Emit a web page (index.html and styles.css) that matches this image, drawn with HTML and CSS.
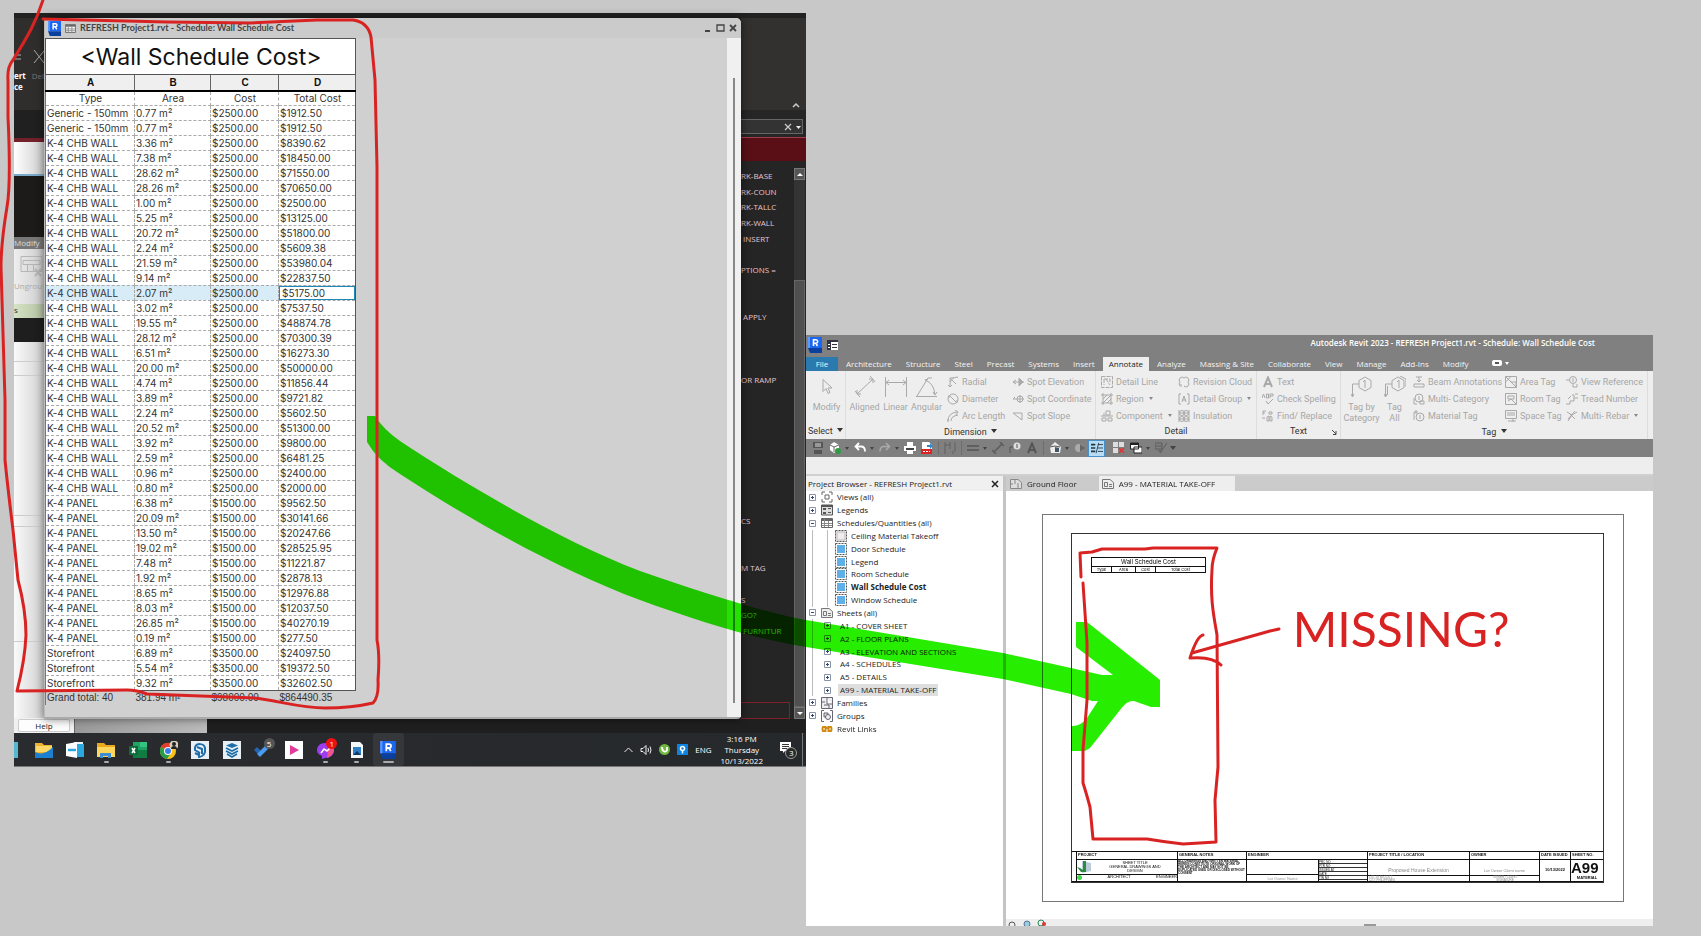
FILE: index.html
```html
<!DOCTYPE html>
<html lang="en">
<head>
<meta charset="utf-8">
<title>Wall Schedule Cost</title>
<link rel="stylesheet" href="styles.css">
</head>
<body>
<svg class="defs" aria-hidden="true">
  <symbol id="revit" viewBox="0 0 14 16"><path fill="#1d66f0" d="M0 0h14v11H0z"/><path fill="#5a9bff" d="M0 0h2v11H0z"/><path fill="#0b3f9e" d="M0 11h14v5H2z"/><path fill="none" stroke="#fff" stroke-width="1.6" d="M5.500 9V2.800h2.500a1.700 1.700 0 0 1 0 3.400H5.500M7.800 6.200l1.700 2.800"/></symbol>
  <symbol id="grid" viewBox="0 0 12 10"><path fill="#fff" stroke="#666" d="M.5.5h11v9H.5z"/><path stroke="#666" stroke-width="2" d="M1 2h10"/><path stroke="#888" d="M3.500 1v8M1 5.500h10M1 7.500h10M7.500 3v6"/></symbol>
  <symbol id="plus" viewBox="0 0 7 7"><path fill="#fff" stroke="#8a93a5" d="M.5.5h6v6h-6z"/><path stroke="#34457a" d="M2 3.500h3M3.500 2v3"/></symbol>
  <symbol id="minus" viewBox="0 0 7 7"><path fill="#fff" stroke="#8a93a5" d="M.5.5h6v6h-6z"/><path stroke="#34457a" d="M2 3.500h3"/></symbol>
  <symbol id="sched" viewBox="0 0 12 12"><path fill="#5fb0e8" d="M2 2h8v8H2z"/><path fill="none" stroke="#555" stroke-dasharray="2 1" d="M.5.5h11v11H.5z"/></symbol>
  <symbol id="sheet" viewBox="0 0 12 10"><path fill="#eee" stroke="#777" d="M.5.5H8l3.500 3v6H.5z"/><path fill="none" stroke="#777" d="M2.500 7.500v-4h3v4zM7 5.500h3M7 7.500h3"/></symbol>
</svg>
<main class="board">

<section class="shot shot-left" aria-label="Desktop with schedule window">
  <div class="desk">
    <div class="topline"></div>
    <div class="strip">
      <div class="s-ribbon">
        <svg width="30" height="14" viewBox="0 0 30 14" stroke="#aaa" fill="none"><path d="M0 5h7M0 9h7M20 0l10 13M30 1L20 13"/></svg>
        <div class="s-words"><b>ert<br>ce</b><span>Del</span></div>
      </div>
      <div class="s-bar"></div><div class="s-page"></div><div class="s-black"></div>
      <div class="s-modify">Modify</div>
      <div class="s-group"><svg width="24" height="22" viewBox="0 0 24 22" fill="none" stroke="#b5b5b5"><path d="M1 1.500h21v15H1zM3 5.500h17v4H3zM7.500 10v6M13.500 10v6"/><path stroke-width="2" d="M15 14l6 7M21 14l-6 7"/></svg><span>Ungrou</span></div>
      <div class="s-green">s</div><div class="s-dark"></div><div class="s-paper"><hr><hr><hr><hr><hr></div>
    </div>
    <section class="win">
      <header class="win-bar">
        <svg width="13" height="15"><use href="#revit"/></svg>
        <svg width="11" height="9"><use href="#grid"/></svg>
        <h2>REFRESH Project1.rvt - Schedule: Wall Schedule Cost</h2>
        <button aria-label="Minimize"><svg width="8" height="8"><path stroke="#444" stroke-width="2" d="M1 7h5"/></svg></button>
        <button aria-label="Maximize"><svg width="9" height="8"><path fill="none" stroke="#444" stroke-width="1.300" d="M1 1h7v6H1z"/></svg></button>
        <button aria-label="Close"><svg width="8" height="8"><path stroke="#444" stroke-width="1.800" d="M1 1l6 6M7 1L1 7"/></svg></button>
      </header>
      <div class="win-body">
        <table class="schedule">
          <colgroup><col class="c1"><col class="c2"><col class="c3"><col class="c4"></colgroup>
          <thead>
            <tr class="title"><th colspan="4">&lt;Wall Schedule Cost&gt;</th></tr>
            <tr class="letters"><th>A</th><th>B</th><th>C</th><th>D</th></tr>
            <tr class="names"><th>Type</th><th>Area</th><th>Cost</th><th>Total Cost</th></tr>
          </thead>
          <tbody>
<tr><td>Generic - 150mm<td>0.77 m²<td>$2500.00<td>$1912.50
<tr><td>Generic - 150mm<td>0.77 m²<td>$2500.00<td>$1912.50
<tr><td>K-4 CHB WALL<td>3.36 m²<td>$2500.00<td>$8390.62
<tr><td>K-4 CHB WALL<td>7.38 m²<td>$2500.00<td>$18450.00
<tr><td>K-4 CHB WALL<td>28.62 m²<td>$2500.00<td>$71550.00
<tr><td>K-4 CHB WALL<td>28.26 m²<td>$2500.00<td>$70650.00
<tr><td>K-4 CHB WALL<td>1.00 m²<td>$2500.00<td>$2500.00
<tr><td>K-4 CHB WALL<td>5.25 m²<td>$2500.00<td>$13125.00
<tr><td>K-4 CHB WALL<td>20.72 m²<td>$2500.00<td>$51800.00
<tr><td>K-4 CHB WALL<td>2.24 m²<td>$2500.00<td>$5609.38
<tr><td>K-4 CHB WALL<td>21.59 m²<td>$2500.00<td>$53980.04
<tr><td>K-4 CHB WALL<td>9.14 m²<td>$2500.00<td>$22837.50
<tr class="current"><td>K-4 CHB WALL<td>2.07 m²<td>$2500.00<td><input value="$5175.00" aria-label="Total Cost">
<tr><td>K-4 CHB WALL<td>3.02 m²<td>$2500.00<td>$7537.50
<tr><td>K-4 CHB WALL<td>19.55 m²<td>$2500.00<td>$48874.78
<tr><td>K-4 CHB WALL<td>28.12 m²<td>$2500.00<td>$70300.39
<tr><td>K-4 CHB WALL<td>6.51 m²<td>$2500.00<td>$16273.30
<tr><td>K-4 CHB WALL<td>20.00 m²<td>$2500.00<td>$50000.00
<tr><td>K-4 CHB WALL<td>4.74 m²<td>$2500.00<td>$11856.44
<tr><td>K-4 CHB WALL<td>3.89 m²<td>$2500.00<td>$9721.82
<tr><td>K-4 CHB WALL<td>2.24 m²<td>$2500.00<td>$5602.50
<tr><td>K-4 CHB WALL<td>20.52 m²<td>$2500.00<td>$51300.00
<tr><td>K-4 CHB WALL<td>3.92 m²<td>$2500.00<td>$9800.00
<tr><td>K-4 CHB WALL<td>2.59 m²<td>$2500.00<td>$6481.25
<tr><td>K-4 CHB WALL<td>0.96 m²<td>$2500.00<td>$2400.00
<tr><td>K-4 CHB WALL<td>0.80 m²<td>$2500.00<td>$2000.00
<tr><td>K-4 PANEL<td>6.38 m²<td>$1500.00<td>$9562.50
<tr><td>K-4 PANEL<td>20.09 m²<td>$1500.00<td>$30141.66
<tr><td>K-4 PANEL<td>13.50 m²<td>$1500.00<td>$20247.66
<tr><td>K-4 PANEL<td>19.02 m²<td>$1500.00<td>$28525.95
<tr><td>K-4 PANEL<td>7.48 m²<td>$1500.00<td>$11221.87
<tr><td>K-4 PANEL<td>1.92 m²<td>$1500.00<td>$2878.13
<tr><td>K-4 PANEL<td>8.65 m²<td>$1500.00<td>$12976.88
<tr><td>K-4 PANEL<td>8.03 m²<td>$1500.00<td>$12037.50
<tr><td>K-4 PANEL<td>26.85 m²<td>$1500.00<td>$40270.19
<tr><td>K-4 PANEL<td>0.19 m²<td>$1500.00<td>$277.50
<tr><td>Storefront<td>6.89 m²<td>$3500.00<td>$24097.50
<tr><td>Storefront<td>5.54 m²<td>$3500.00<td>$19372.50
<tr><td>Storefront<td>9.32 m²<td>$3500.00<td>$32602.50
          </tbody>
          <tfoot><tr><td>Grand total: 40<td>381.94 m²<td>$98000.00<td>$864490.35</tfoot>
        </table>
        <div class="scroll"><i></i></div>
      </div>
    </section>
    <div class="list">
      <div class="l-ribbon"><svg width="9" height="6"><path fill="none" stroke="#ccc" stroke-width="1.500" d="M1 5l3-3 3 3"/></svg></div>
      <div class="l-search"><div><svg width="18" height="8"><path stroke="#ccc" stroke-width="1.200" d="M1 1l6 6M7 1L1 7"/><path fill="#eee" d="M12 3h5l-2.500 3z"/></svg></div></div>
      <div class="l-red"></div>
      <div class="l-main">
        <div class="l-rows">
          <span>RK-BASE</span><span>RK-COUN</span><span>RK-TALLC</span><span>RK-WALL</span><span>&nbsp;INSERT</span>
          <span class="r7">PTIONS =</span><span class="r10">&nbsp;APPLY</span><span class="r14">OR RAMP</span>
          <span class="r23">CS</span><span class="r26">M TAG</span><span class="r28">S</span><span class="r29">GO?</span><span class="r30">&nbsp;FURNITUR</span>
        </div>
        <div class="l-scroll"><b></b><i></i><b class="down"></b></div>
        <div class="l-box"></div>
      </div>
    </div>
    <div class="under"><div class="help"><button>Help</button></div><div class="grey"></div></div>
  </div>
  <footer class="taskbar">
    <span class="tb-cut"></span>
    <div class="apps">
      <button aria-label="Edge folder"><svg viewBox="0 0 18 18"><path fill="#f0b232" d="M0 2h7l2 2h8v12H0z"/><path fill="#ffd866" d="M1 5h16v6H1z"/><path fill="#1c7fd0" d="M0 11c6 3 12 1 18-5v11H0z"/></svg></button>
      <button aria-label="Mail"><svg viewBox="0 0 18 18"><path fill="#e8f4fb" d="M8 1h9v14H8z"/><path fill="#2aa8e0" d="M10 3h8v13h-8z"/><path fill="#fff" d="M0 3l11-2v16L0 15z"/><path stroke="#2aa8e0" stroke-width="2.500" d="M2 9h8"/></svg></button>
      <button class="run" aria-label="Explorer"><svg viewBox="0 0 18 18"><path fill="#e9a820" d="M0 2h7l2 2h9v3H0z"/><path fill="#ffd65c" d="M0 6h18v10H0z"/><path fill="#3f8fd0" d="M3 12h11v5h-3v-2H6v2H3z"/></svg></button>
      <button aria-label="Excel"><svg viewBox="0 0 18 18"><path fill="#21a366" d="M4 1h14v16H4z"/><path fill="#107c41" d="M4 9h14v8H4z"/><path fill="#33c481" d="M11 1h7v5h-7z"/><path fill="#0c6b37" d="M0 5h9v9H0z"/><path stroke="#fff" stroke-width="1.500" d="M3 7l3 5M6 7l-3 5"/></svg></button>
      <button class="run" aria-label="Chrome"><svg viewBox="0 0 18 18"><circle cx="8" cy="10" r="8" fill="#fbc116"/><path fill="#e33b2e" d="M8 10L1 6a8 8 0 0 1 14 0z"/><path fill="#2a9d48" d="M8 10L1 6a8 8 0 0 0 6 12l4-6z"/><circle cx="8" cy="10" r="4" fill="#fff"/><circle cx="8" cy="10" r="3" fill="#3b7ded"/><circle cx="14" cy="4" r="4.500" fill="#d8cdb8"/><circle cx="14" cy="3" r="2" fill="#222"/><path fill="#222" d="M11 8c0-4 6-4 6 0z"/></svg></button>
      <button aria-label="SketchUp"><svg viewBox="0 0 18 18"><path fill="#e8f0f5" d="M0 0h18v18H0z"/><path fill="none" stroke="#1f6ea8" stroke-width="2" d="M4 6c2-4 9-4 10 1v4c-1 4-5 5-6 5v-4M4 6v3l5 3M4 12l4 2M6 6l5 2v5"/></svg></button>
      <button aria-label="LayOut"><svg viewBox="0 0 18 18"><path fill="#e8f0f5" d="M0 0h18v18H0z"/><path fill="#1f6ea8" d="M9 2l6 2.500L9 7 3 4.500z"/><path fill="none" stroke="#1f6ea8" stroke-width="1.800" d="M3 7l6 3 6-3M3 10l6 3 6-3M4 13l5 3 5-3"/></svg></button>
      <button aria-label="To Do"><svg viewBox="0 0 18 18"><path fill="#2563b5" d="M0 9l3-3 5 5-3 3z"/><path fill="#4a9df0" d="M3 13L13 3l3 3L6 16z"/></svg><em class="dim">5</em></button>
      <button aria-label="Player"><svg viewBox="0 0 18 18"><path fill="#fff" d="M0 0h18v18H0z"/><path fill="#e23a9a" d="M5 4l9 5-9 5z"/></svg></button>
      <button class="run" aria-label="Messenger"><svg viewBox="0 0 18 18"><path fill="#9b3df0" d="M8 2c5 0 9 3 9 7.500S13 17 8 17l-3 1v-3C2 14 0 12 0 9.500 0 5 3 2 8 2z"/><path fill="#f0558c" d="M12 3c3 1 5 3 5 6s-3 7-7 8z"/><path fill="none" stroke="#fff" stroke-width="1.600" d="M4 12l3-4 3 2 3-3"/></svg><em>1</em></button>
      <button class="run" aria-label="Photo"><svg viewBox="0 0 18 18"><path fill="#f4f6f8" d="M3 1h9l3 3v13H3z"/><path fill="#2d7fc8" d="M5 6h8v8H5z"/><path fill="#123a66" d="M5 14l4-4 4 4z"/></svg></button>
      <button class="run on" aria-label="Revit"><svg viewBox="0 0 14 16"><use href="#revit"/></svg></button>
    </div>
    <div class="tray">
      <svg width="9" height="6"><path fill="none" stroke="#eee" d="M.5 5l4-4 4 4"/></svg>
      <svg width="12" height="10" fill="none" stroke="#eee"><path d="M1 3.500h2l3-3v9l-3-3H1zM8 3q1 2 0 4M10 1.500q2 3.500 0 7"/></svg>
      <svg width="11" height="11"><circle cx="5.500" cy="5.500" r="5.500" fill="#6fb83f"/><path fill="none" stroke="#fff" stroke-width="1.800" d="M3 3c0 5 4 6 5 3V3"/></svg>
      <svg width="11" height="11"><path fill="#0c84e4" d="M0 0h11v11H0z"/><circle cx="5.500" cy="4.500" r="2" fill="none" stroke="#fff" stroke-width="1.500"/><path stroke="#fff" stroke-width="1.500" d="M5.500 7v2.500"/></svg>
      <span>ENG</span>
      <time>3:16 PM<br>Thursday<br>10/13/2022</time>
      <svg class="note" width="20" height="18"><path fill="#fff" d="M1 1h11v9H6l-2 2v-2H1z"/><path stroke="#333" d="M3 3.500h7M3 5.500h7M3 7.500h5"/><circle cx="12" cy="12" r="5.500" fill="#26282a" stroke="#999"/><text x="10" y="15" fill="#fff">3</text></svg>
    </div>
  </footer>
</section>

<section class="shot shot-right" aria-label="Revit window">
  <header class="r-title">
    <svg width="14" height="16"><use href="#revit"/></svg>
    <svg width="11" height="10"><path fill="#fff" d="M0 0h11v10H0z"/><path fill="#334" d="M0 0h11v2H0zM0 2h4v8H0zM5 4h5v1H5zM5 7h5v1H5z"/><path fill="#fff" d="M1 4h2v1H1zM1 7h2v1H1z"/></svg>
    <h1>Autodesk Revit 2023 - REFRESH Project1.rvt - Schedule: Wall Schedule Cost</h1>
  </header>
  <nav class="r-tabs">
    <button class="file">File</button><button>Architecture</button><button>Structure</button><button>Steel</button><button>Precast</button><button>Systems</button><button>Insert</button><button class="on">Annotate</button><button>Analyze</button><button>Massing &amp; Site</button><button>Collaborate</button><button>View</button><button>Manage</button><button>Add-Ins</button><button>Modify</button>
    <button aria-label="Ribbon display" class="disp"><svg width="18" height="7"><rect width="10" height="6" rx="2" fill="#fff"/><path fill="#555" d="M3 2h4v2H3z"/><path fill="#fff" d="M13 2h4l-2 3z"/></svg></button>
  </nav>
  <div class="ribbon">
    <div class="panel p-select"><div class="tools"><button class="big"><svg width="12" height="18" viewBox="0 0 12 18"><path d="M2 1.500v12l3-3 2 5 2-1-2-4.500h4z"/></svg>Modify</button></div><button class="cap">Select <i></i></button></div>
    <div class="panel p-dim"><div class="tools">
      <button class="big"><svg width="22" height="22" viewBox="0 0 22 22"><path d="M3 18L19 3M1 15l5 6M16 0l5 6M3 18v-4M3 18h4M19 3v4M19 3h-4"/></svg>Aligned</button>
      <button class="big"><svg width="22" height="22" viewBox="0 0 22 22"><path d="M.5 1v20M21.500 1v20M1 6.500h20M4 4L1 6.500 4 9M18 4l3 2.500L18 9"/></svg>Linear</button>
      <button class="big"><svg width="22" height="22" viewBox="0 0 22 22"><path d="M0 20.500h21M1 20L12 2l4 0M9 4q9 3 10 15M9 4l3-1M19 19l-2-3M19 19l2-3"/></svg>Angular</button>
      <div class="small two">
        <button><svg viewBox="0 0 12 12"><path d="M11 1Q2 1 3 11M3 2l6 6M3 2v4M3 2h4M1 9l2 2 2-2"/></svg>Radial</button>
        <button><svg viewBox="0 0 12 12"><path d="M1 6h8M4 4L1 6l3 2M11 6h1"/><path fill="#aaa" d="M7 2v8l4-4z"/></svg>Spot Elevation</button>
        <button><svg viewBox="0 0 12 12"><circle cx="6" cy="6" r="5"/><path d="M2 2l8 8M2 2v3M10 10V7"/></svg>Diameter</button>
        <button><svg viewBox="0 0 12 12"><circle cx="8" cy="6" r="3"/><path d="M1 6h11M8 2v8M3 4L1 6"/></svg>Spot Coordinate</button>
        <button><svg viewBox="0 0 12 12"><path d="M1 11Q1 3 10 2M4 11q0-5 7-6M8 0l3 2-2 3M1 9v3"/></svg>Arc Length</button>
        <button><svg viewBox="0 0 12 12"><path d="M1 3h9v7zM1 3"/></svg>Spot Slope</button>
      </div></div><button class="cap">Dimension <i></i></button></div>
    <div class="panel p-detail"><div class="tools"><div class="small two">
        <button><svg viewBox="0 0 12 12"><path d="M.5.5h11v11H.5zM3 3v6M5 3l4 6M9 3v3M3 3h6" stroke-dasharray="4 1"/></svg>Detail Line</button>
        <button><svg viewBox="0 0 12 12"><path d="M2 2q2-2 4 0 2-2 4 0 2 2 0 4 2 2 0 4-2 2-4 0M2 2Q0 4 2 6q-2 2 0 4M3 8v3"/></svg>Revision Cloud</button>
        <button><svg viewBox="0 0 12 12"><path d="M2 0v12M10 0v12M0 2h12M0 10h12M2 6l4-4M2 10l8-8M6 10l4-4"/></svg>Region <i></i></button>
        <button><svg viewBox="0 0 12 12"><path d="M3 1H1v10h2M9 1h2v10H9M4 9l2-6 2 6M4 7h4"/></svg>Detail Group <i></i></button>
        <button><svg viewBox="0 0 12 12"><path d="M5 1h4v4H5zM0 6h12M1 8h4v3H1zM7 8h4v3H7zM3 3v3"/></svg>Component <i></i></button>
        <button><svg viewBox="0 0 12 12"><path d="M1 0v12M11 0v12M1 3h10M1 9h10"/><circle cx="4" cy="3" r="2.500"/><circle cx="8" cy="3" r="2.500"/><circle cx="4" cy="9" r="2.500"/><circle cx="8" cy="9" r="2.500"/></svg>Insulation</button>
      </div></div><div class="cap">Detail</div></div>
    <div class="panel p-text"><div class="tools"><div class="small">
        <button><svg viewBox="0 0 12 12"><path stroke-width="2" d="M2 11L6 1.500 10 11M4 8h4"/></svg>Text</button>
        <button><svg viewBox="0 0 12 12"><path d="M0 5l1.500-4L3 5M4.500 1v4h2v-4zM8 5V1h3v2H8M4 8l2 3 5-5" /></svg>Check Spelling</button>
        <button><svg viewBox="0 0 12 12"><path d="M1 5V1h3M1 3h2M7 2h3v2H7zM0 8h3M5 11V7l2-1v5zM8 11V6l2 1v4z"/></svg>Find/ Replace</button>
      </div></div><div class="cap">Text <svg class="corner" width="5" height="5"><path d="M0 0l4 4M4 1v3.500H1" stroke="#444"/></svg></div></div>
    <div class="panel p-tag"><div class="tools">
      <button class="big"><svg width="22" height="22" viewBox="0 0 22 22"><path d="M14 1l6 3.500v7L14 15l-6-3.500v-7zM8 8H1.500v12M0 18l1.500 3L3 18M12 6l2-2v8"/></svg>Tag by<br>Category</button>
      <button class="big"><svg width="22" height="22" viewBox="0 0 22 22"><path d="M14 1l6 3.500v7L14 15l-6-3.500v-7zM16 0l6 3v8M8 8H1.500v12M3.500 10v9M0 18l1.500 3L3 18M13 6l2-2v8"/></svg>Tag<br>All</button>
      <div class="small three">
        <button><svg viewBox="0 0 12 12"><path d="M3 1h6M6 1v5M4 4l2 2 2-2M1 8h10M1 11h10M1 8v3M11 8v3"/></svg>Beam Annotations</button>
        <button><svg viewBox="0 0 12 12"><path d="M.5.5h11v11H.5zM.5.5l11 11M.5 6L6 .5M6 6h5v5"/></svg>Area Tag</button>
        <button><svg viewBox="0 0 12 12"><circle cx="7" cy="4" r="3.500"/><path d="M0 4h3M7 2v4M7 8v3h4V8"/></svg>View Reference</button>
        <button><svg viewBox="0 0 12 12"><circle cx="6" cy="5" r="4"/><path d="M6 3v4M1 5v6h3M7 11V8h4v3z"/></svg>Multi- Category</button>
        <button><svg viewBox="0 0 12 12"><path d="M.5.5h11v11H.5zM3 3h6v3H3zM3 8l3-2 5 5"/></svg>Room Tag</button>
        <button><svg viewBox="0 0 12 12"><path d="M0 11h4V8h4V5h4M2 6l3-3M6 2h2v3M9 1h3"/></svg>Tread Number</button>
        <button><svg viewBox="0 0 12 12"><circle cx="7" cy="7" r="4"/><path d="M7 5v4M1 2v8M1 2h4M3 0v4"/></svg>Material Tag</button>
        <button><svg viewBox="0 0 12 12"><path d="M.5.5h11v8H.5zM2 3h8M2 5h8M3 11h8M8 8v4"/></svg>Space Tag</button>
        <button><svg viewBox="0 0 12 12"><path d="M1 2l5 3 5-3M6 5L2 11M3 3l6 6M9 1l-7 8"/></svg>Multi- Rebar <i></i></button>
      </div></div><button class="cap">Tag <i></i></button></div>
  </div>
  <div class="qat">
    <button aria-label="Save"><svg viewBox="0 0 12 12"><path fill="#555" d="M1 0h10v6H1zM2 8h8v4H2z"/><path fill="#999" d="M3 1h6v4H3z"/></svg></button>
    <button aria-label="Sync"><svg viewBox="0 0 12 12"><path fill="#fff" d="M5 0l5 3v5L5 11 1 8V3z"/><path stroke="#666" fill="none" d="M1 3l4 2 5-2M5 5v5"/><circle cx="9" cy="9" r="3" fill="#2f9b45"/></svg></button><button class="car" aria-label="Sync options"></button>
    <button aria-label="Undo"><svg viewBox="0 0 12 12"><path fill="none" stroke="#fff" stroke-width="1.800" d="M5 1L1.500 4.500 5 8M2 4.500h5q4 0 4 5"/></svg></button><button class="car" aria-label="Undo options"></button>
    <button aria-label="Redo"><svg viewBox="0 0 12 12"><path fill="none" stroke="#aaa" stroke-width="1.500" d="M7 1l3.500 3.500L7 8M10 4.500H5q-4 0-4 5"/></svg></button><button class="car" aria-label="Redo options"></button>
    <button aria-label="Print"><svg viewBox="0 0 12 12"><path fill="#fff" d="M3 0h6v4H3zM0 4h12v5H0zM3 8h6v4H3z"/><path fill="#444" d="M2 6h8v2H2z"/></svg></button>
    <button aria-label="PDF"><svg viewBox="0 0 12 12"><path fill="#fff" d="M1 0h7l3 3v8H1z"/><path fill="#d22" d="M0 7h11v5H0z"/><path fill="#38c" d="M6 3h3V1l3 3-3 3V5H6z"/><path stroke="#fff" d="M2 9.500h7" stroke-dasharray="2 1"/></svg></button>
    <hr><button aria-label="Measure"><svg viewBox="0 0 12 12" fill="none" stroke="#606060"><path d="M1 0v12M11 0v10M1 3h5M6 0v7M8 9q3 3 0 3"/></svg></button>
    <hr><button aria-label="Aligned"><svg viewBox="0 0 12 12" stroke="#555" stroke-width="1.500"><path d="M0 4h12M0 8h12"/></svg></button><button class="car" aria-label="Measure options"></button>
    <button aria-label="Dimension"><svg viewBox="0 0 12 12" stroke="#5a5a5a" stroke-width="1.500" fill="none"><path d="M2 10l8-8M0 8l4 4M8 0l4 4"/></svg></button>
    <button aria-label="Tag"><svg viewBox="0 0 12 12"><circle cx="8" cy="4" r="3.500" fill="#ddd"/><path stroke="#555" fill="none" d="M8 2v4M4 5H1v6"/></svg></button>
    <button aria-label="Text"><svg viewBox="0 0 12 12" stroke="#555" stroke-width="2" fill="none"><path d="M2 11L6 1.500 10 11M4 8h4"/></svg></button>
    <hr><button aria-label="3D view"><svg viewBox="0 0 12 12"><path fill="#eee" d="M6 0l6 5-1 6H2L1 5z"/><path fill="#456" d="M6 5l4 1v4H6z"/><path stroke="#555" fill="none" d="M1 5l5-1 5 1"/></svg></button><button class="car" aria-label="View options"></button>
    <button aria-label="Section"><svg viewBox="0 0 12 12"><circle cx="5" cy="6" r="4" fill="#aaa"/><path fill="#666" d="M6 2l5 4-5 4z"/></svg></button>
    <button class="act" aria-label="Thin lines"><svg viewBox="0 0 14 12" stroke="#234"><path stroke-width="2" d="M0 2h5M0 6h5M0 10h5"/><path d="M8 2h6M8 6h6M8 10h6M9 0L6 12"/></svg></button>
    <button aria-label="Close views"><svg viewBox="0 0 12 12"><path fill="#ddd" d="M0 0h5v5H0zM6 0h5v5H6zM0 6h5v5H0z"/><path stroke="#d33" stroke-width="1.500" d="M6 6l5 5M11 6l-5 5"/></svg></button>
    <button aria-label="Switch windows"><svg viewBox="0 0 12 12"><path fill="#fff" stroke="#222" d="M.5 1h8v6h-8zM4 5h8v6H4z"/><path stroke="#222" stroke-width="2" d="M0 2h9"/></svg></button><button class="car" aria-label="Window options"></button>
    <button aria-label="User interface"><svg viewBox="0 0 12 12" stroke="#5c5c5c" fill="none"><path d="M0 1h7v6H0zM0 4h7M5 11l7-10M3 9h4"/></svg></button><button class="car last" aria-label="Customize"></button>
  </div>
  <div class="options"></div>
  <div class="work">
    <aside class="browser">
      <header><h3>Project Browser - REFRESH Project1.rvt</h3><button aria-label="Close browser"><svg width="8" height="8"><path stroke="#222" stroke-width="1.500" d="M1 1l6 6M7 1L1 7"/></svg></button></header>
      <ul class="tree">
        <li><svg class="ex"><use href="#plus"/></svg><svg class="ic" viewBox="0 0 12 12"><path fill="none" stroke="#666" d="M1 4V1h3M8 1h3v3M1 8v3h3M8 11h3V8M4 4h4v4H4z"/></svg>Views (all)</li>
        <li><svg class="ex"><use href="#plus"/></svg><svg class="ic" viewBox="0 0 12 12"><path fill="#ddd" stroke="#555" d="M.5 1h11v10H.5z"/><path stroke="#555" stroke-width="2" d="M1 2h10"/><path fill="#555" d="M2 4h3v2H2zM2 8h3v2H2zM7 4h3v1H7zM7 8h3v1H7z"/></svg>Legends</li>
        <li><svg class="ex"><use href="#minus"/></svg><svg class="ic"><use href="#grid"/></svg>Schedules/Quantities (all)</li>
        <li class="sub"><svg class="ic" viewBox="0 0 12 12"><path fill="#f0ecec" stroke="#555" stroke-dasharray="2 1" d="M.5.5h11v11H.5z"/><path fill="none" stroke="#bbb" d="M2 2h8v8H2z"/></svg>Ceiling Material Takeoff</li>
        <li class="sub"><svg class="ic"><use href="#sched"/></svg>Door Schedule</li>
        <li class="sub"><svg class="ic"><use href="#sched"/></svg>Legend</li>
        <li class="sub"><svg class="ic"><use href="#sched"/></svg>Room Schedule</li>
        <li class="sub"><svg class="ic"><use href="#sched"/></svg><b>Wall Schedule Cost</b></li>
        <li class="sub"><svg class="ic"><use href="#sched"/></svg>Window Schedule</li>
        <li><svg class="ex"><use href="#minus"/></svg><svg class="ic"><use href="#sheet"/></svg>Sheets (all)</li>
        <li class="sh"><svg class="ex"><use href="#plus"/></svg><span>A1 - COVER SHEET</span></li>
        <li class="sh"><svg class="ex"><use href="#plus"/></svg><span>A2 - FLOOR PLANS</span></li>
        <li class="sh"><svg class="ex"><use href="#plus"/></svg><span>A3 - ELEVATION AND SECTIONS</span></li>
        <li class="sh"><svg class="ex"><use href="#plus"/></svg><span>A4 - SCHEDULES</span></li>
        <li class="sh"><svg class="ex"><use href="#plus"/></svg><span>A5 - DETAILS</span></li>
        <li class="sh"><svg class="ex"><use href="#plus"/></svg><mark>A99 - MATERIAL TAKE-OFF</mark></li>
        <li><svg class="ex"><use href="#plus"/></svg><svg class="ic" viewBox="0 0 12 12"><path fill="#eee" stroke="#667" d="M.5.5h11v11H.5zM6 1v6h5M1 5h3M3 8h5v3"/></svg>Families</li>
        <li><svg class="ex"><use href="#plus"/></svg><svg class="ic" viewBox="0 0 12 12"><path fill="none" stroke="#667" d="M3 .5H.5v11H3M9 .5h2.500v11H9"/><path fill="#ddd" stroke="#667" d="M3 3h4v4H3z"/><circle cx="7" cy="7" r="2.500" fill="#eee" stroke="#667"/></svg>Groups</li>
        <li><svg class="ex"></svg><svg class="ic" viewBox="0 0 12 12"><path fill="none" stroke="#d08a14" stroke-width="2" d="M2 4h2.500v4H2q-1-2 0-4zM7.500 4H10q1 2 0 4H7.500zM4 5h4"/></svg>Revit Links</li>
      </ul>
    </aside>
    <div class="views">
      <nav class="v-tabs">
        <button><svg width="12" height="10" viewBox="0 0 12 10"><path fill="#ddd" stroke="#888" d="M.5.5H8l3.500 3v6H.5zM5 1v4M1 5h2M8 4v5"/></svg>Ground Floor</button>
        <button class="on"><svg width="12" height="10"><use href="#sheet"/></svg>A99 - MATERIAL TAKE-OFF</button>
      </nav>
      <div class="canvas"><div class="page"><div class="frame">
        <table class="mini"><caption>Wall Schedule Cost</caption><tr><th>Type<th>Area<th>Cost<th>Total Cost</table>
        <div class="block">
          <div class="cell b0"></div>
          <div class="cell b1"><h4>PROJECT</h4><div class="logo"><svg width="16" height="14"><path fill="#bcd" d="M5 1l9 2v8l-9 2z"/><path fill="#2c8c3c" d="M6 1h3v11H4L0 7l3 1 3 2z"/></svg><p>SHEET TITLE<br>GENERAL DRAWINGS AND<br>DESIGN</p></div><div class="foot"><svg width="5" height="5"><circle cx="2.500" cy="2.500" r="2.500" fill="#3fd84b"/></svg><span>ARCHITECT</span><span>ENGINEER</span></div></div>
          <div class="cell b2"><h4>GENERAL NOTES</h4><p>ALL DRAWINGS AND WRITTEN MATERIAL HEREIN CONSTITUTE ORIGINAL WORK OF THE ARCHITECT AND MAY NOT BE DUPLICATED USED OR DISCLOSED WITHOUT CONSENT</p></div>
          <div class="cell b3"><h4>ENGINEER</h4><div class="split"><div><p class="low">Lot Owner Name</p></div><ul><li>PRC NO<li>PTR NO<li>ISSUED AT<li>DATE<li>TIN NO</ul></div></div>
          <div class="cell b4"><h4>PROJECT TITLE / LOCATION</h4><p class="mid">Proposed House Extension</p><p class="foot">LOT 10 BLOCK 2<br>CITY PHILIPPINES</p></div>
          <div class="cell b5"><h4>OWNER</h4><p class="mid">Lot Owner Client name</p><p class="foot ctr">OWNER / CLIENT<br>SIGNATURE</p></div>
          <div class="cell b6"><h4>DATE ISSUED</h4><p class="mid dk">10/13/2022</p></div>
          <div class="cell b7"><h4>SHEET NO.</h4><strong>A99</strong><p class="ctr dk">MATERIAL</p></div>
        </div>
      </div></div></div>
      <div class="v-bar"><svg width="40" height="7"><circle cx="6" cy="6" r="3" fill="none" stroke="#555"/><circle cx="21" cy="5" r="3" fill="#9cd" stroke="#579"/><circle cx="35" cy="4" r="3" fill="none" stroke="#285"/><circle cx="38" cy="5" r="2" fill="#d33"/></svg><i></i></div>
    </div>
  </div>
</section>

<svg class="ink marker" viewBox="0 0 1701 936" preserveAspectRatio="none" aria-hidden="true"><path fill="#27ee00" d="M367 416h8Q384 430 400 441C470 487 560 540 640 571 700 592 770 614 806 620L1003 653 1071 668 1102 675H1113L1076 647V622H1087L1145 668 1160 680V707H1151L1134 701Q1127 700 1120 710L1090 748 1085 751H1071V726Q1080 727 1087 718L1098 701H1092L1071 694 1003 679 806 647C760 640 700 622 640 600 560 570 470 520 400 474Q377 460 367 442z"/></svg>
<svg class="ink" viewBox="0 0 1701 936" preserveAspectRatio="none" aria-hidden="true"><g fill="none" stroke="#d92323" stroke-width="3" stroke-linecap="round" stroke-linejoin="round">
<path d="M43 0C36 22 28 36 13 60Q7 67 8 80V117C10 160 10 190 7 207 4 225 1 245 1 267L5 400V460Q8 490 13 530L18 580Q26 610 26 635 25 660 17 691L127 690Q137 690 147 694L255 698C280 701 300 708 325 708 345 708 360 706 373 703Q379 697 378 680 380 655 377 640V167L375 80 371 37Q368 22 353 20H317L250 23 167 22 43 19"/>
<path d="M1081 577L1080 553 1092 552 1102 549H1145L1153 548H1217Q1212 560 1212 570C1210 600 1214 617 1217 635L1218 767 1215 800 1216 842 1183 844Q1165 842 1147 839H1093L1090 807Q1086 792 1083 783V750L1087 700V643L1083 583M1279 629L1270 631 1192 653M1203 635Q1197 636 1190 658 1212 656 1221 665"/></g></svg>
<p class="ink-note">MISSING?</p>
</main>
</body>
</html>
```
FILE: styles.css
```css
* { box-sizing: border-box; }
body { margin: 0; background: #c8c8c8; font: 8px/12px "Open Sans", "Noto Sans", sans-serif; color: #222; }
h1, h2, h3, h4, p, ul { margin: 0; padding: 0; font-size: inherit; }
ul { list-style: none; }
button { margin: 0; padding: 0; border: 0; background: none; font: inherit; color: inherit; }
svg { flex: none; }
.defs { position: absolute; width: 0; height: 0; }

.board { position: relative; min-height: 100vh; display: grid; grid-template-columns: 792fr 847fr; padding: 13px 48px 10px 14px; overflow: hidden; isolation: isolate; }
.shot { min-width: 0; display: flex; flex-direction: column; isolation: isolate; }
.shot-left { align-self: start; }
.shot-right { align-self: end; background: #eee; min-height: 591px; }
.ink { position: absolute; left: 0; top: 0; width: 100%; height: 100%; pointer-events: none; }
.marker { mix-blend-mode: multiply; }
.ink-note { position: absolute; left: 76%; top: 64%; font: 48px/60px Lato, sans-serif; color: #d92323; }

/* left capture */
.desk { display: grid; grid-template-columns: 30px 1fr 65px; grid-template-rows: 5px minmax(701px, auto) 14px; background: #1f1f1f; }
.topline { grid-area: 1 / 1 / 2 / 4; background: #222; }
.strip { grid-area: 2 / 1; display: flex; flex-direction: column; overflow: hidden; color: #fff; }
.s-ribbon { height: 92px; background: #302e2c; padding-top: 32px; }
.s-words { display: flex; justify-content: space-between; line-height: 11px; height: 28px; margin-top: 3px; }
.s-words span { color: #777; }
.s-bar { height: 32px; background: #202020; border-bottom: 4px solid #74202a; }
.s-page { height: 34px; background: linear-gradient(90deg, #fff, #ccc); border-bottom: 2px solid #7aa9c8; }
.s-black { height: 61px; background: #1c1b1a; }
.s-modify { height: 12px; background: #777; color: #ddd; }
.s-group { height: 55px; background: linear-gradient(90deg, #eee, #ccc); padding: 6px 0 0 6px; color: #aaa; }
.s-group span { display: block; margin-left: -6px; }
.s-green { height: 14px; background: linear-gradient(90deg, #d5e4c4, #b5c0a4); color: #333; }
.s-dark { height: 24px; background: #1e1e1e; }
.s-paper { flex: 1; background: linear-gradient(90deg, #fafafa, #d0d0d0); }
.s-paper hr { margin: 0; border: 0; border-bottom: 1px solid #ccc; height: 20px; }
.s-paper hr:nth-child(2) { height: 14px; }
.s-paper hr:nth-child(3) { height: 140px; }
.s-paper hr:nth-child(4) { height: 11px; }
.s-paper hr:nth-child(5) { height: 115px; }

.win { grid-area: 2 / 2; background: #d0d0d0; border-radius: 0 5px 4px 0; border-bottom: 2px solid #aaa; border-left: 1px solid #bbb; box-shadow: 0 0 10px #0008; z-index: 1; display: flex; flex-direction: column; }
.win-bar { height: 20px; display: flex; align-items: center; gap: 4px; padding: 0 4px 0 3px; background: #cbcbcb; border-radius: 0 5px 0 0; }
.win-bar h2 { flex: 1; font: bold 9px/12px Lato, sans-serif; color: #444; }
.win-bar button { display: flex; }
.win-body { flex: 1; display: flex; justify-content: space-between; align-items: flex-start; }
.schedule { width: 311px; table-layout: fixed; border-collapse: collapse; border-left: 1px solid #777; background: #fff; font: 10px/14px Inter, sans-serif; color: #333; }
.c1 { width: 89px; } .c2 { width: 76px; } .c3 { width: 68px; }
.schedule th, .schedule td { padding: 0 0 0 1px; height: 15px; border: 1px dashed #aaa; font-weight: 400; white-space: nowrap; }
.schedule tr.title th { height: 36px; font-size: 23px; color: #111; border: 1px solid #555; }
.schedule tr.letters th { height: 16px; font: bold 10px/13px "Liberation Sans", sans-serif; background: #efefef; border: 1px solid #666; border-bottom: 2px solid #000; color: #111; }
.schedule tr.names th { height: 14px; line-height: 13px; }
.schedule tbody td:last-child, .schedule tr.names th:last-child { border-right: 1px solid #555; }
.current td { background: #d8ecf8; }
.schedule .current td:last-child { padding: 0; }
.schedule input { display: block; width: 100%; height: 14px; border: 1px solid #1e88b8; padding: 0 0 0 2px; font: inherit; color: inherit; background: #fff; outline: 0; }
.schedule tfoot td { background: #d0d0d0; border: 0; border-top: 1px solid #555; font-family: "Liberation Sans", sans-serif; }
.scroll { align-self: stretch; width: 14px; background: #f0f0f0; padding: 40px 6px 14px; display: flex; }
.scroll i { width: 2px; background: #888; }

.list { grid-area: 2 / 3; color: #e6c4cc; display: flex; flex-direction: column; overflow: hidden; }
.l-ribbon { height: 92px; background: #33312f; display: flex; align-items: flex-end; justify-content: flex-end; padding: 0 5px 2px; }
.l-search { height: 27px; padding: 9px 3px 3px 0; background: #262626; }
.l-search div { height: 15px; border: 1px solid #666; border-left: 0; background: #333; text-align: right; line-height: 8px; padding-top: 3px; }
.l-red { height: 24px; background: #5a0f17; border-top: 1px solid #a04048; }
.l-main { flex: 1; position: relative; display: grid; grid-template-columns: 1fr 12px; padding-top: 7px; background: #252525; }
.l-rows { height: 471px; display: grid; grid-template-rows: repeat(30, 1fr); align-items: center; white-space: nowrap; }
.r7 { grid-row: 7; } .r10 { grid-row: 10; } .r14 { grid-row: 14; } .r23 { grid-row: 23; } .r26 { grid-row: 26; } .r28 { grid-row: 28; } .r29 { grid-row: 29; } .r30 { grid-row: 30; }
.l-scroll { background: #343434; display: flex; flex-direction: column; margin-right: 1px; }
.l-scroll b { height: 12px; background: #555; border: 1px solid #777; display: grid; place-items: center; }
.l-scroll b::after { content: ""; border: 3px solid transparent; border-top: 0; border-bottom-color: #fff; }
.l-scroll b.down::after { border: 3px solid transparent; border-bottom: 0; border-top-color: #fff; }
.l-scroll i { flex: 1; margin-top: 100px; background: #505050; border: 1px solid #666; }
.l-box { position: absolute; left: 0; right: 16px; bottom: 0; height: 17px; border: 1px solid #80202a; border-left: 0; }
.under { grid-area: 3 / 1 / 4 / 4; display: flex; margin-top: -1px; }
.help { width: 61px; background: #f0f0f0; padding: 1px 4px; border-right: 1px solid #666; }
.help button { width: 52px; height: 13px; border: 1px solid #ccc; border-radius: 2px; background: #fdfdfd; line-height: 11px; display: block; }
.grey { width: 132px; background: linear-gradient(90deg, #999, #bbb); }

.taskbar { height: 34px; background: linear-gradient(90deg, #292b2f, #26292b); display: flex; align-items: center; color: #fff; border-bottom: 1px solid #777; }
.tb-cut { width: 4px; height: 16px; margin-right: 10px; background: #56b8d0; }
.apps { width: 376px; height: 100%; display: grid; grid-template-columns: repeat(12, 1fr); }
.apps button { position: relative; display: grid; place-items: center; }
.apps svg { width: 18px; height: 18px; }
.apps .on { background: #35373b; border-radius: 3px; }
.apps .run::after { content: ""; position: absolute; bottom: 3px; left: 13px; width: 5px; height: 2px; background: #aaa; border-radius: 1px; }
.apps .on::after { left: 10px; width: 11px; }
.apps em { position: absolute; right: 4px; top: 5px; width: 11px; height: 11px; border-radius: 6px; background: #e11; font-style: normal; line-height: 11px; }
.apps em.dim { background: #555; }
.tray { margin-left: auto; display: flex; align-items: center; gap: 7px; padding-right: 3px; margin-right: 3px; border-right: 1px solid #777; height: 100%; line-height: 11px; }
.tray time { text-align: center; margin: 0 9px 0 2px; }

/* right capture */
.r-title { height: 22px; background: #808080; color: #fff; display: flex; gap: 5px; padding: 2px 58px 0 2px; }
.r-title svg + svg { margin-top: 3px; }
.r-title h1 { margin-left: auto; font-weight: 600; line-height: 11px; }
.r-tabs { height: 14px; background: #808080; color: #f4f4f4; display: flex; line-height: 14px; gap: 2px; }
.r-tabs button { padding: 0 6px; }
.r-tabs .file { background: #2a7ab0; width: 32px; }
.r-tabs .on { background: #eee; color: #222; }
.r-tabs .disp { padding: 0 16px; }
.ribbon { display: flex; height: 68px; color: #a6a6a6; background: #eee; font: 9px/12px Roboto, sans-serif; }
.panel { display: flex; flex-direction: column; border-right: 1px solid #ddd; }
.p-select { width: 40px; } .p-dim { width: 250px; } .p-detail { width: 161px; } .p-text { width: 84px; } .p-tag { width: 307px; }
.tools { flex: 1; display: flex; padding-top: 2px; }
.panel svg { fill: none; stroke: #a9a9a9; }
.big { width: 31px; display: flex; flex-direction: column; align-items: center; line-height: 11px; gap: 4px; padding-top: 3px; height: 50px; white-space: nowrap; }
.p-select .tools { padding-left: 5px; }
.p-select svg { margin: 2px 0; }
.p-dim .tools { padding-left: 3px; }
.p-tag .tools { padding-left: 4px; }
.p-tag .big { width: 33px; }
.small { flex: 1; display: grid; grid-auto-rows: 17px; padding-left: 5px; }
.small.two { grid-template-columns: 65px 1fr; }
.p-detail .small.two { grid-template-columns: 77px 1fr; }
.small.three { grid-template-columns: 92px 61px 1fr; padding-left: 2px; }
.small button { display: flex; align-items: center; gap: 3px; white-space: nowrap; }
.small svg { width: 12px; height: 12px; }
.panel i, .car::after { border: 2px solid transparent; border-top: 3px solid #888; border-bottom: 0; margin-left: 2px; }
.cap { height: 16px; line-height: 14px; color: #333; text-align: center; position: relative; }
.cap i { display: inline-block; vertical-align: 2px; border-width: 4px 3px 0; border-top-color: #333; }
.corner { position: absolute; right: 3px; top: 6px; }

.qat { height: 18px; background: #808080; display: flex; align-items: center; padding-left: 3px; }
.qat button { width: 17px; height: 17px; display: grid; place-items: center; }
.qat svg { width: 12px; height: 12px; }
.qat .car { width: 8px; }
.car::after { content: ""; margin: 0; border-top-color: #444; }
.car.last::after { border-width: 4px 3px 0; }
.qat .act { background: #b8dcf4; border: 1px solid #4a90c8; margin-right: 5px; }
.qat hr { width: 1px; height: 14px; margin: 0 2px 0 3px; border: 0; background: #6e6e6e; }
.options { height: 19px; border-bottom: 2px solid #d0d0d0; }
.work { flex: 1; display: flex; }
.browser { width: 200px; background: #fff; border-right: 3px solid #c4c4c4; }
.browser header { height: 15px; display: flex; justify-content: space-between; align-items: center; background: #f0f0f0; padding: 0 4px 0 2px; }
.browser h3 { font-weight: 400; white-space: nowrap; }
.browser button { display: flex; }
.tree { height: 244px; display: grid; grid-auto-rows: 1fr; }
.tree li { display: flex; align-items: center; padding-left: 3px; white-space: nowrap; }
.tree .ex { width: 7px; height: 7px; margin-right: 5px; }
.tree .ic { width: 12px; height: 12px; margin-right: 4px; }
.tree .sub { padding-left: 29px; background: linear-gradient(#bbb, #bbb) 6px 0 / 1px 100% no-repeat, linear-gradient(#bbb, #bbb) 21px 0 / 1px 100% no-repeat; }
.tree .sh { padding-left: 18px; background: linear-gradient(#bbb, #bbb) 6px 0 / 1px 100% no-repeat; }
.tree .sh span, .tree mark { padding: 0 2px; margin-left: 2px; }
.tree mark { background: #dedede; color: inherit; }
.views { flex: 1; min-width: 0; display: flex; flex-direction: column; }
.v-tabs { height: 15px; background: #cbcbcb; display: flex; }
.v-tabs button { display: flex; align-items: center; gap: 5px; padding: 0 22px 0 4px; white-space: nowrap; }
.v-tabs .on { background: #eee; padding: 0 20px 0 3px; }
.canvas { flex: 1; background: #fff; padding: 23px 29px 17px 36px; display: flex; }
.v-bar { height: 7px; background: #eee; display: flex; align-items: flex-end; }
.v-bar i { width: 12px; height: 2px; background: #999; margin-left: 318px; }
.page { flex: 1; min-width: 0; border: 1px solid #777; padding: 18px 19px 18px 28px; display: flex; }
.frame { flex: 1; min-width: 0; border: 1px solid #333; display: flex; flex-direction: column; justify-content: space-between; }
.mini { margin: 23px 0 0 19px; width: 115px; border-collapse: collapse; table-layout: fixed; font: 4px/4px Inter, sans-serif; color: #000; }
.mini caption { border: 1px solid #111; border-bottom: 0; font-size: 6px; line-height: 8px; }
.mini th { border: 1px solid #111; padding: 0; font-weight: 400; height: 6px; }
.mini th:nth-child(1) { width: 20px; } .mini th:nth-child(2) { width: 24px; } .mini th:nth-child(3) { width: 20px; }
.block { display: flex; height: 31px; border-top: 1px solid #111; border-bottom: 1px solid #111; font: 4px/4px "Liberation Sans", sans-serif; color: #111; }
.cell { border-right: 1px solid #111; }
.cell h4 { height: 8px; border-bottom: 1px solid #111; line-height: 6px; padding-left: 1px; white-space: nowrap; }
.b0 { width: 5px; } .b1 { width: 101px; } .b2 { width: 69px; } .b3 { width: 121px; } .b4 { flex: 1; } .b5 { width: 70px; } .b6 { width: 31px; } .b7 { width: 32px; border-right: 0; }
.logo { display: flex; height: 15px; text-align: center; border-bottom: 1px solid #111; }
.logo p { flex: 1; padding-top: 1px; }
.b1 .foot { display: flex; gap: 4px; justify-content: space-between; }
.b2 p { font-size: 3px; line-height: 3px; font-weight: bold; }
.split { display: grid; grid-template-columns: 1fr 49px; }
.split ul { border-left: 1px solid #111; }
.split li { height: 4px; line-height: 4px; font-size: 3px; border-bottom: 1px solid #333; }
.split .low { border-top: 1px solid #111; margin-top: 14px; text-align: center; color: #999; line-height: 7px; }
.mid { height: 15px; padding-top: 8px; text-align: center; color: #888; font-size: 5px; white-space: nowrap; }
.b5 .mid { padding-top: 9px; font-size: 4px; }
p.foot { font-size: 3px; line-height: 3px; border-top: 1px solid #111; color: #888; padding-left: 1px; }
.ctr { text-align: center; }
.mid.dk, .dk { color: #111; font-weight: bold; font-size: 4px; }
.b7 strong { display: block; font: bold 15px/16px "Liberation Sans", sans-serif; }
```
